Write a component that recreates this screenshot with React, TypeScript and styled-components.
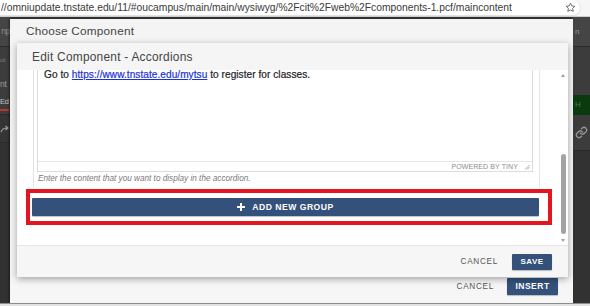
import React from "react";
import styled, { createGlobalStyle } from "styled-components";

const Global = createGlobalStyle`
  html, body { margin: 0; padding: 0; }
  body {
    width: 590px;
    height: 306px;
    overflow: hidden;
    background: #353535;
    font-family: "Liberation Sans", Arial, sans-serif;
  }
`;

const Screen = styled.div`
  width: 590px;
  height: 306px;
  display: flex;
  flex-direction: column;
  background: #353535;
`;

const AddressBar = styled.div`
  height: 17px;
  display: flex;
  background: #f6f6f6;
  border-bottom: 1px solid #cfcfcf;
  box-sizing: border-box;
`;

const UrlField = styled.div`
  width: 581px;
  height: 16px;
  display: flex;
  align-items: center;
  background: #fff;
  border: 1px solid #e2e2e2;
  border-left: none;
  border-top: none;
  border-radius: 0 8px 8px 0;
  box-sizing: border-box;
  padding: 0 4px 0 1px;
`;

const Url = styled.span`
  flex: 1;
  font-size: 10.3px;
  color: #3a3a3a;
  white-space: nowrap;
  overflow: hidden;
`;

const Stage = styled.div`
  flex: 1;
  display: flex;
  min-height: 0;
`;

const PageEdge = styled.div<{ $w: number }>`
  width: ${(p) => p.$w}px;
  flex: none;
  display: flex;
  flex-direction: column;
  overflow: hidden;
  background: #323232;
  color: #8a8a8a;
`;

const EdgeBlock = styled.div<{ $h: number; $bg: string; $line?: boolean; $align?: string }>`
  height: ${(p) => p.$h}px;
  flex: none;
  display: flex;
  align-items: center;
  justify-content: ${(p) => p.$align || "flex-start"};
  background: ${(p) => p.$bg};
  border-bottom: ${(p) => (p.$line ? "1px solid #2a2a2a" : "none")};
  box-sizing: border-box;
  white-space: nowrap;
`;

const EdgeText = styled.span<{ $size: number; $color: string; $under?: boolean }>`
  font-size: ${(p) => p.$size}px;
  color: ${(p) => p.$color};
  line-height: 1;
  letter-spacing: -0.3px;
  padding-bottom: ${(p) => (p.$under ? "3px" : "0")};
  border-bottom: ${(p) => (p.$under ? "2px solid #b5392c" : "none")};
`;

const OuterModal = styled.div`
  flex: 1;
  margin-top: 2px;
  display: flex;
  flex-direction: column;
  background: #f4f4f4;
  box-shadow: -1px 0 2px rgba(0, 0, 0, 0.5);
  min-width: 0;
`;

const OuterHeader = styled.div`
  height: 24px;
  display: flex;
  align-items: center;
  padding-left: 16px;
  font-size: 11.8px;
  color: #444;
  letter-spacing: 0.2px;
`;

const InnerModal = styled.div`
  height: 234px;
  margin: 0 5px 0 7px;
  display: flex;
  flex-direction: column;
  background: #fff;
  box-shadow: 0 2px 7px rgba(0, 0, 0, 0.35);
  position: relative;
  z-index: 1;
`;

const InnerHeader = styled.div`
  height: 27px;
  display: flex;
  align-items: center;
  padding-left: 15px;
  background: #f5f5f5;
  font-size: 11.9px;
  color: #444;
  letter-spacing: 0.25px;
`;

const InnerBody = styled.div`
  height: 175px;
  display: flex;
  overflow: hidden;
`;

const ScrollContent = styled.div`
  flex: 1;
  display: flex;
  flex-direction: column;
  padding: 0 3px 0 9px;
  min-width: 0;
`;

const FieldGroup = styled.div`
  margin: 0 12px 0 7px;
  padding: 0 6px 3px 3px;
  border-left: 1px solid #e4e4e4;
  border-right: 1px solid #e4e4e4;
  display: flex;
  flex-direction: column;
`;

const Editor = styled.div`
  height: 102px;
  display: flex;
  flex-direction: column;
  border: 1px solid #dcdcdc;
  border-top: none;
  box-sizing: border-box;
`;

const EditorText = styled.div`
  flex: 1;
  padding-left: 6px;
  font-size: 10.1px;
  line-height: 9px;
  color: #222;
  letter-spacing: 0.05px;
  -webkit-text-stroke: 0.2px #222;
`;

const Link = styled.a`
  color: #1a33d6;
  text-decoration: underline;
  -webkit-text-stroke: 0.2px #1a33d6;
`;

const StatusBar = styled.div`
  height: 9px;
  display: flex;
  align-items: center;
  justify-content: flex-end;
  gap: 6px;
  padding-right: 2px;
  border-top: 1px solid #e6e6e6;
  font-size: 7px;
  color: #8c8c8c;
  letter-spacing: 0.1px;
`;

const Help = styled.div`
  margin-top: 1px;
  padding-left: 1px;
  line-height: 11px;
  font-size: 8.2px;
  font-style: italic;
  color: #7a7a7a;
`;

const Highlight = styled.div`
  margin-top: 2px;
  border: 4px solid #e3161f;
  padding: 5px 9px 5px 2px;
`;

const PrimaryButton = styled.button<{ $w?: number; $h: number; $size?: number }>`
  width: ${(p) => (p.$w ? `${p.$w}px` : "100%")};
  height: ${(p) => p.$h}px;
  display: flex;
  align-items: center;
  justify-content: center;
  gap: 7px;
  border: none;
  border-radius: 1px;
  padding: 0;
  background: #33517a;
  color: #fff;
  font-family: "Liberation Sans", Arial, sans-serif;
  font-weight: bold;
  font-size: ${(p) => p.$size || 8}px;
  letter-spacing: 0.5px;
  box-shadow: 0 1px 1px rgba(0, 0, 0, 0.25);
  cursor: pointer;
`;

const Scrollbar = styled.div`
  width: 10px;
  margin-left: 3px;
  display: flex;
  flex-direction: column;
  align-items: center;
`;

const Arrow = styled.div<{ $dir: "up" | "down" }>`
  height: 10px;
  display: flex;
  align-items: center;
  justify-content: center;
  &::before {
    content: "";
    border-left: 2.5px solid transparent;
    border-right: 2.5px solid transparent;
    ${(p) =>
      p.$dir === "up"
        ? "border-bottom: 3px solid #a0a0a0;"
        : "border-top: 3px solid #a0a0a0;"}
  }
`;

const Thumb = styled.div`
  margin-top: auto;
  margin-bottom: 1px;
  width: 5px;
  height: 80px;
  border-radius: 3px;
  background: #a3a3a3;
`;

const Footer = styled.div<{ $h: number; $pr: number; $pb: number; $gap: number; $line?: boolean }>`
  height: ${(p) => p.$h}px;
  display: flex;
  align-items: center;
  justify-content: flex-end;
  gap: ${(p) => p.$gap}px;
  padding: 0 ${(p) => p.$pr}px ${(p) => p.$pb}px 0;
  box-sizing: border-box;
  background: #f6f6f6;
  border-top: ${(p) => (p.$line ? "1px solid #e6e6e6" : "none")};
`;

const TextButton = styled.span`
  font-size: 8.2px;
  color: #555;
  letter-spacing: 0.7px;
`;

const BottomEdge = styled.div`
  height: 3px;
  flex: none;
  background: #e2e2e2;
  border-top: 1px solid #8c8c8c;
  box-sizing: border-box;
`;

const StarIcon = () => (
  <svg width="11" height="11" viewBox="0 0 24 24" fill="none" stroke="#555" strokeWidth="1.8" strokeLinejoin="round">
    <path d="M12 2.5l2.9 6.1 6.6.8-4.9 4.6 1.3 6.5L12 17.3l-5.9 3.2 1.3-6.5-4.9-4.6 6.6-.8z" />
  </svg>
);

const ResizeIcon = () => (
  <svg width="6" height="6" viewBox="0 0 6 6" stroke="#999" strokeWidth="0.8">
    <path d="M1 5.5L5.5 1M3 5.5L5.5 3" />
  </svg>
);

const PlusIcon = () => (
  <svg width="8" height="8" viewBox="0 0 8 8" fill="#fff">
    <rect x="3" y="0" width="2" height="8" />
    <rect x="0" y="3" width="8" height="2" />
  </svg>
);

const ShareIcon = () => (
  <svg width="10" height="10" viewBox="0 0 10 10" fill="none" stroke="#9a9a9a" strokeWidth="1.2">
    <path d="M1 8C2 5 4 4 7 4M5.5 2L8 4 5.5 6" />
  </svg>
);

const LinkIcon = () => (
  <svg width="13" height="13" viewBox="0 0 24 24" fill="none" stroke="#9a9a9a" strokeWidth="2.4" strokeLinecap="round">
    <path d="M10 13a5 5 0 0 0 7.5.5l3-3a5 5 0 0 0-7-7l-1.7 1.7" />
    <path d="M14 11a5 5 0 0 0-7.5-.5l-3 3a5 5 0 0 0 7 7l1.7-1.7" />
  </svg>
);

export default function App() {
  return (
    <>
      <Global />
      <Screen>
        <AddressBar>
          <UrlField>
            <Url>//omniupdate.tnstate.edu/11/#oucampus/main/main/wysiwyg/%2Fcit%2Fweb%2Fcomponents-1.pcf/maincontent</Url>
            <StarIcon />
          </UrlField>
        </AddressBar>
        <Stage>
          <PageEdge $w={10}>
            <EdgeBlock $h={30} $bg="#454545" $line $align="flex-end">
              <EdgeText $size={8.5} $color="#8e8e8e">np</EdgeText>
            </EdgeBlock>
            <EdgeBlock $h={26} $bg="#3c3c3c">
              <EdgeText $size={6} $color="#7a7a7a">cit</EdgeText>
            </EdgeBlock>
            <EdgeBlock $h={22} $bg="#3c3c3c">
              <EdgeText $size={8.5} $color="#9a9a9a">nt</EdgeText>
            </EdgeBlock>
            <EdgeBlock $h={20} $bg="#3c3c3c" $line>
              <EdgeText $size={7.5} $color="#c4c4c4" $under>Ed</EdgeText>
            </EdgeBlock>
            <EdgeBlock $h={28} $bg="#353535" $line>
              <ShareIcon />
            </EdgeBlock>
          </PageEdge>
          <OuterModal>
            <OuterHeader>Choose Component</OuterHeader>
            <InnerModal>
              <InnerHeader>Edit Component - Accordions</InnerHeader>
              <InnerBody>
                <ScrollContent>
                  <FieldGroup>
                    <Editor>
                      <EditorText>
                        Go to <Link href="#">https://www.tnstate.edu/mytsu</Link> to register for classes.
                      </EditorText>
                      <StatusBar>
                        POWERED BY TINY
                        <ResizeIcon />
                      </StatusBar>
                    </Editor>
                    <Help>Enter the content that you want to display in the accordion.</Help>
                  </FieldGroup>
                  <Highlight>
                    <PrimaryButton $h={18} $size={8.6}>
                      <PlusIcon />
                      ADD NEW GROUP
                    </PrimaryButton>
                  </Highlight>
                </ScrollContent>
                <Scrollbar>
                  <Arrow $dir="up" />
                  <Thumb />
                  <Arrow $dir="down" />
                </Scrollbar>
              </InnerBody>
              <Footer $h={32} $pr={16} $pb={0} $gap={14} $line>
                <TextButton>CANCEL</TextButton>
                <PrimaryButton $w={40} $h={16}>SAVE</PrimaryButton>
              </Footer>
            </InnerModal>
            <Footer $h={26} $pr={15} $pb={8} $gap={13}>
              <TextButton>CANCEL</TextButton>
              <PrimaryButton $w={51} $h={17} $size={8.5}>INSERT</PrimaryButton>
            </Footer>
          </OuterModal>
          <PageEdge $w={17}>
            <EdgeBlock $h={30} $bg="#454545" $line>
              <EdgeText $size={8} $color="#9a9a9a">&nbsp;n</EdgeText>
            </EdgeBlock>
            <EdgeBlock $h={48} $bg="#3c3c3c" />
            <EdgeBlock $h={20} $bg="#0c3a0f">
              <EdgeText $size={8} $color="#3f7a45">&nbsp;H</EdgeText>
            </EdgeBlock>
            <EdgeBlock $h={36} $bg="#3c3c3c" $line $align="center">
              <LinkIcon />
            </EdgeBlock>
          </PageEdge>
        </Stage>
        <BottomEdge />
      </Screen>
    </>
  );
}
